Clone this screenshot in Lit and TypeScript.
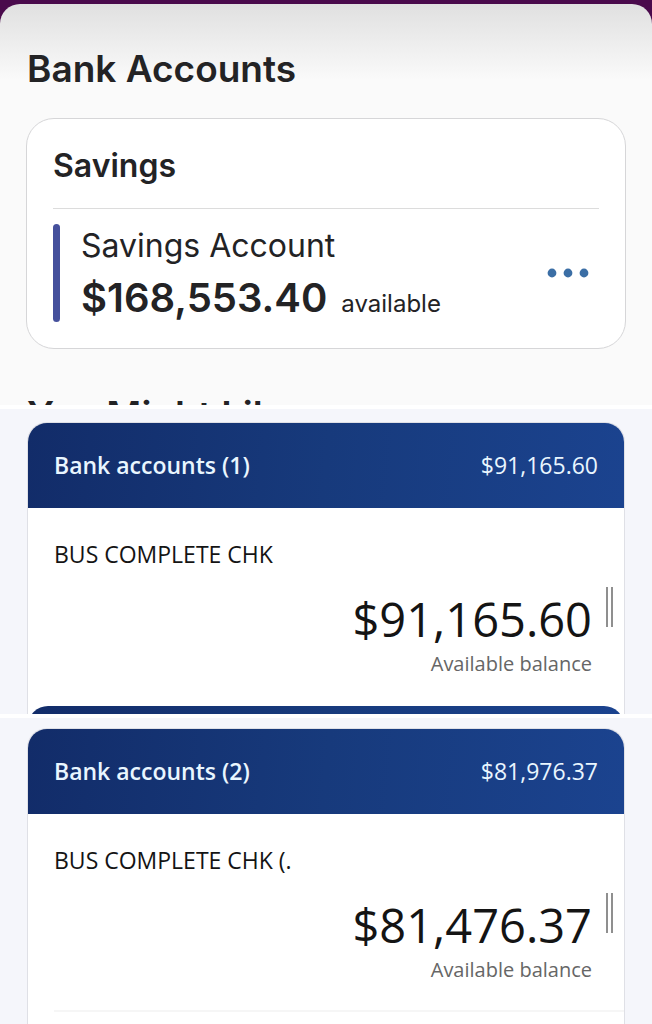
import { LitElement, html, css } from 'lit';
import { customElement, property } from 'lit/decorators.js';

@customElement('savings-card')
export class SavingsCard extends LitElement {

  @property() group = '';
  @property() name = '';
  @property() amount = '';

  static styles = css`
    :host {
      display: block;
      box-sizing: border-box;
      padding: 25px 26px 26px;
      background: #fff;
      border: 1px solid #d6d6d8;
      border-radius: 28px;
      font-family: Inter, sans-serif;
      color: #232325;
    }

    .group {
      margin: 0;
      padding-bottom: 20px;
      border-bottom: 1px solid #dcdcdc;
      font-size: 32px;
      line-height: 44px;
      font-weight: 600;
    }

    .account {
      display: flex;
      align-items: stretch;
      margin-top: 15px;
    }

    .bar {
      width: 7px;
      border-radius: 4px;
      background: #45509c;
    }

    .details {
      flex: 1;
      padding-left: 21px;
    }

    .name {
      font-size: 32px;
      line-height: 44px;
    }

    .balance {
      display: flex;
      align-items: baseline;
      gap: 14px;
      padding-top: 6px;
    }

    .amount {
      font-size: 40px;
      line-height: 48px;
      font-weight: 600;
    }

    .note {
      font-size: 24px;
      line-height: 28px;
    }

    .more {
      align-self: center;
      display: flex;
      padding: 8px 10px;
      border: 0;
      background: none;
      cursor: pointer;
    }
  `;

  render() {
    return html`
      <h2 class="group">${this.group}</h2>
      <div class="account">
        <span class="bar"></span>
        <div class="details">
          <div class="name">${this.name}</div>
          <div class="balance">
            <span class="amount">${this.amount}</span>
            <span class="note">available</span>
          </div>
        </div>
        <button class="more" aria-label="More options">
          <svg width="42" height="10" viewBox="0 0 42 10" fill="#3b6ea5">
            <circle cx="5" cy="5" r="4.4"></circle>
            <circle cx="21" cy="5" r="4.4"></circle>
            <circle cx="37" cy="5" r="4.4"></circle>
          </svg>
        </button>
      </div>
    `;
  }
}

@customElement('account-group')
export class AccountGroup extends LitElement {

  @property() heading = '';
  @property() total = '';
  @property() name = '';
  @property() balance = '';

  static styles = css`
    :host {
      display: block;
      margin: 0 27px;
      background: #fff;
      border: 1px solid #dfe0e6;
      border-bottom: 0;
      border-radius: 20px 20px 0 0;
      font-family: "Open Sans", sans-serif;
      color: #141414;
    }

    .header {
      display: flex;
      justify-content: space-between;
      align-items: center;
      padding: 0 26px;
      border-radius: 19px 19px 0 0;
      background: linear-gradient(95deg, #122c69, #173a7c 50%, #1b438f);
      color: #e9f6ff;
      font-size: 23px;
      line-height: 85px;
    }

    .heading {
      margin: 0;
      font-size: 23px;
      font-weight: 600;
    }

    .name {
      padding: 28px 26px 0;
      font-size: 23px;
      line-height: 36px;
    }

    .row {
      display: flex;
      justify-content: flex-end;
      gap: 14px;
      padding: 11px 11px 0 0;
    }

    .figures {
      text-align: right;
    }

    .balance {
      padding-top: 4px;
      font-size: 47px;
      line-height: 64px;
    }

    .note {
      font-size: 20px;
      line-height: 26px;
      color: #666;
    }

    .handle {
      box-sizing: border-box;
      width: 7px;
      height: 40px;
      margin-top: 4px;
      border: solid #8f8f8f;
      border-width: 0 2px;
    }
  `;

  render() {
    return html`
      <header class="header">
        <h2 class="heading">${this.heading}</h2>
        <span>${this.total}</span>
      </header>
      <div class="name">${this.name}</div>
      <div class="row">
        <div class="figures">
          <div class="balance">${this.balance}</div>
          <div class="note">Available balance</div>
        </div>
        <span class="handle"></span>
      </div>
      <slot></slot>
    `;
  }
}

@customElement('app-root')
export class AppRoot extends LitElement {

  static styles = css`
    :host {
      display: flex;
      flex-direction: column;
      height: 100vh;
      overflow: hidden;
      background: #fff;
    }

    .top {
      padding-top: 4px;
      background: linear-gradient(#4a0a4c 40px, #fafafa 40px);
    }

    .sheet {
      padding: 40px 26px 0;
      border-radius: 20px 20px 0 0;
      background: linear-gradient(#e0e0e0, #fafafa 76px);
      font-family: Inter, sans-serif;
      color: #232325;
    }

    .title {
      margin: 0 1px 24px;
      font-size: 37px;
      line-height: 50px;
      font-weight: 600;
    }

    .promo {
      margin: 44px 1px 0;
      height: 12px;
      overflow: hidden;
      font-size: 38px;
      line-height: 44px;
      font-weight: 600;
    }

    .section {
      padding-top: 13px;
      background: #f5f6fb;
    }

    .last {
      flex: 1;
      display: flex;
      flex-direction: column;
      padding-top: 10px;
    }

    .last account-group {
      flex: 1;
    }

    .gap {
      flex: none;
      height: 4px;
    }

    .next {
      height: 8px;
      margin-top: 29px;
      overflow: hidden;
    }

    .next-header {
      height: 40px;
      border-radius: 20px 20px 0 0;
      background: linear-gradient(90deg, #122c69, #173a7c 50%, #1b438f);
    }

    .rule {
      margin: 27px 0 0 26px;
      border: 0;
      border-top: 2px solid #f6f6f6;
    }
  `;

  render() {
    return html`
      <div class="top">
        <div class="sheet">
          <h1 class="title">Bank Accounts</h1>
          <savings-card
            group="Savings"
            name="Savings Account"
            amount="$168,553.40"
          ></savings-card>
          <h1 class="promo">You Might Like</h1>
        </div>
      </div>
      <div class="gap"></div>
      <div class="section">
        <account-group
          heading="Bank accounts (1)"
          total="$91,165.60"
          name="BUS COMPLETE CHK"
          balance="$91,165.60"
        >
          <div class="next"><div class="next-header"></div></div>
        </account-group>
      </div>
      <div class="gap"></div>
      <div class="section last">
        <account-group
          heading="Bank accounts (2)"
          total="$81,976.37"
          name="BUS COMPLETE CHK (."
          balance="$81,476.37"
        >
          <hr class="rule">
        </account-group>
      </div>
    `;
  }
}
